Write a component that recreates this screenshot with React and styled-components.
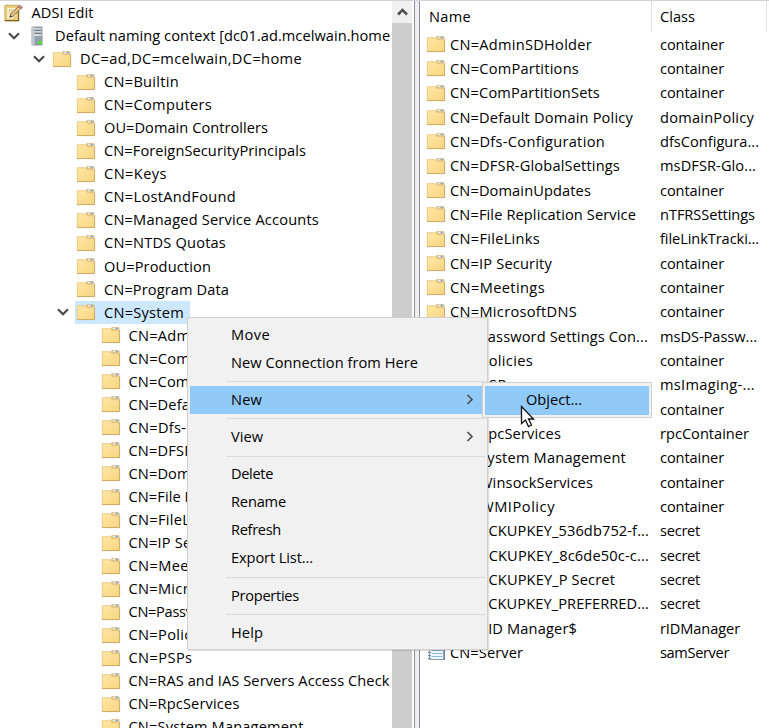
import React, { useLayoutEffect, useRef, useState } from 'react';
import styled, { createGlobalStyle } from 'styled-components';

const GlobalStyle = createGlobalStyle`
  * {
    box-sizing: border-box;
  }
  body {
    margin: 0;
    overflow: hidden;
    background: #fff;
    color: #000;
    font: 14.6px/23px 'Open Sans', 'Noto Sans', sans-serif;
  }
`;
const Window = styled.div`
  display: flex;
  position: relative;
  width: 769px;
  height: 728px;
  overflow: hidden;
  background: #efeff2;
  border-top: 1px solid #d2d2d8;
`;
const TreePane = styled.div`
  display: flex;
  width: 415px;
  border-right: 1px solid #898e99;
  background: #fff;
`;
const Tree = styled.div`
  flex: 1;
  min-width: 0;
  margin-right: 2px;
  overflow: hidden;
`;
const TreeRow = styled.div`
  display: flex;
  align-items: center;
  height: 23.05px;
  padding-left: ${({ $indent }) => $indent}px;
  white-space: nowrap;
`;
const Toggle = styled.div`
  display: flex;
  justify-content: center;
  flex: none;
  width: 24px;
`;
const Item = styled.div`
  display: flex;
  align-items: center;
  gap: 8px;
  height: 23px;
  padding: 0 6px 0 1px;
  background: ${({ $selected }) => ($selected ? '#cce8ff' : 'transparent')};
`;
const IconBox = styled.div`
  display: flex;
  justify-content: center;
  flex: none;
  width: 20px;
`;
const Scrollbar = styled.div`
  width: 20px;
  margin-right: 2px;
  background: #cdcdcd;
`;
const ScrollButton = styled.div`
  display: flex;
  align-items: center;
  justify-content: center;
  height: 22px;
  background: #f0f0f0;
`;
const ListPane = styled.div`
  flex: 1;
  margin-left: 4px;
  border-left: 1px solid #898e99;
  background: #fff;
  overflow: hidden;
`;
const ListHeader = styled.div`
  display: flex;
  height: 31px;
`;
const HeaderCell = styled.div`
  width: ${({ $width }) => $width}px;
  padding: 4px 0 0 ${({ $pad }) => $pad}px;
  border-right: 1px solid #e2e2e2;
`;
const ListRow = styled.div`
  display: flex;
  align-items: center;
  height: 24.34px;
  padding-left: 6px;
  white-space: nowrap;
`;
const NameCell = styled.div`
  display: flex;
  align-items: center;
  gap: 4px;
  width: 234px;
`;
const Label = styled.span`
  white-space: pre;
`;
const Menu = styled.div`
  position: absolute;
  left: 187px;
  top: 316px;
  width: 301px;
  height: 333px;
  padding: 3px 2px;
  background: #f1f1f1;
  border: 1px solid #cfcfcf;
  box-shadow: 1px 1px 1px rgba(0, 0, 0, 0.12);
`;
const MenuItem = styled.div`
  display: flex;
  align-items: center;
  justify-content: space-between;
  height: 28.1px;
  padding: 0 11px 2px 41px;
  background: ${({ $active }) => ($active ? '#91c9f7' : 'transparent')};
`;
const Separator = styled.div`
  height: 1px;
  margin: 4px 0 4.1px 36px;
  background: #dadada;
`;
const SubMenu = styled.div`
  position: absolute;
  left: 482px;
  top: 381px;
  width: 170px;
  height: 36px;
  padding: 2px;
  background: #f1f1f1;
  border: 1px solid #cfcfcf;
`;
const SubMenuItem = styled.div`
  display: flex;
  align-items: center;
  height: 29px;
  padding: 0 0 2px 41px;
  margin-top: 1px;
  background: #91c9f7;
`;
const Pointer = styled.svg`
  position: absolute;
  left: 520px;
  top: 404px;
`;

// stretches or tightens the tracking so the text fills the given width
function Text({ children, width }) {
  const ref = useRef(null);
  const [spacing, setSpacing] = useState(-0.3);
  useLayoutEffect(() => {
    if (!width) return;
    const natural =
      ref.current.getBoundingClientRect().width - spacing * children.length;
    setSpacing((width - natural) / children.length);
    // eslint-disable-next-line react-hooks/exhaustive-deps
  }, [children, width]);
  return (
    <Label ref={ref} style={{ letterSpacing: `${spacing}px` }}>
      {children}
    </Label>
  );
}

const FolderIcon = () => (
  <svg width='20' height='18' viewBox='0 0 20 18'>
    <defs>
      <linearGradient id='folder' x1='0' y1='0' x2='1' y2='1'>
        <stop offset='0' stopColor='#ffe8a6' />
        <stop offset='1' stopColor='#f6d47f' />
      </linearGradient>
    </defs>
    <path d='M10 5V2l1-1h6.5l1 1v4z' fill='#dfc08a' />
    <path d='M12 1.8h5v1.4h-5z' fill='#f4efe2' />
    <path d='M14.6 1.8h2v1.4h-2z' fill='#5aa2d6' />
    <path d='M1 2.4h8.2l2 2H19V17H1z' fill='url(#folder)' />
    <path d='M1.3 17V2.7h7.9l2 2h7.5' fill='none' stroke='#e2c079' strokeWidth='.7' />
    <path d='M1 16.6h17.6V4.5' fill='none' stroke='#c6a464' strokeWidth='.9' />
  </svg>
);
const ServerIcon = () => (
  <svg width='12' height='20' viewBox='0 0 12 20'>
    <path d='M1 1h10v18H1z' fill='#93a1ac' stroke='#7e8a93' strokeWidth='.8' />
    <path d='M1 1h2.5v18H1z' fill='#bcc7ce' />
    <path d='M3 3h7.5M3 6h7.5M3 9h7.5' stroke='#e9eef1' strokeWidth='1.4' />
    <path d='M3.5 4.2H10M3.5 7.2H10' stroke='#5a6770' strokeWidth='.9' />
    <path d='M7 15h3.4v3.2H7z' fill='#4be32c' />
  </svg>
);
const EditIcon = () => (
  <svg width='22' height='20' viewBox='0 0 22 20'>
    <path d='M1 1.5h15v17H1z' fill='#e9cf7c' stroke='#c3a550' />
    <path d='M3.5 4.5H13v8.5l-4 3H3.5z' fill='#f9f1cd' />
    <path d='M1 18.5h15V8' stroke='#7b641f' fill='none' strokeWidth='1.4' />
    <path d='M5 7h5M5 10h3.5' stroke='#c2b173' />
    <path d='M6.5 14.5l1-3.6 8.3-8 2.7 2.3-8.4 8.3z' fill='#ecc07c' stroke='#66543d' strokeWidth='.9' />
    <path d='M15.5 3L17 1.2l3.7 2.4L19 5.5z' fill='#cf8080' stroke='#a56a6a' strokeWidth='.6' />
    <path d='M6.3 14.8l.6-2.2 1.6 1.4z' fill='#222' />
  </svg>
);
const ListIcon = () => (
  <svg width='20' height='18' viewBox='0 0 20 18'>
    <path d='M3.5 1.5H18v15H3.5z' fill='#eef6fb' stroke='#8a9aa8' />
    <path d='M5.5 4.5h11M5.5 7.5h11M5.5 10.5h11M5.5 13.5h11' stroke='#8fb9d6' />
    <path d='M2 3.5h3M2 6.5h3M2 9.5h3M2 12.5h3M2 15.5h3' stroke='#7c8994' />
    <path d='M18.2 1v16' stroke='#5b6c9c' strokeWidth='1.2' />
  </svg>
);
const Chevron = ({ d, width = 12, height = 8, color = '#4a4a4a', weight = 2.2 }) => (
  <svg width={width} height={height} viewBox={`0 0 ${width} ${height}`}>
    <path d={d} fill='none' stroke={color} strokeWidth={weight} />
  </svg>
);

const icons = { folder: FolderIcon, server: ServerIcon, edit: EditIcon, list: ListIcon };
const Icon = ({ name = 'folder' }) => {
  const Drawing = icons[name];
  return (
    <IconBox>
      <Drawing />
    </IconBox>
  );
};

// indent is the left edge of the toggle column, the root has no toggle
const tree = [
  { text: 'ADSI Edit', indent: 2.5, icon: 'edit', root: true, width: 62 },
  { text: 'Default naming context [dc01.ad.mcelwain.home]', indent: 2, icon: 'server', open: true, width: 340 },
  { text: 'DC=ad,DC=mcelwain,DC=home', indent: 27, open: true, width: 222 },
  { text: 'CN=Builtin', indent: 51, width: 75 },
  { text: 'CN=Computers', indent: 51, width: 108 },
  { text: 'OU=Domain Controllers', indent: 51, width: 164 },
  { text: 'CN=ForeignSecurityPrincipals', indent: 51, width: 202 },
  { text: 'CN=Keys', indent: 51, width: 63 },
  { text: 'CN=LostAndFound', indent: 51, width: 132 },
  { text: 'CN=Managed Service Accounts', indent: 51, width: 215 },
  { text: 'CN=NTDS Quotas', indent: 51, width: 122 },
  { text: 'OU=Production', indent: 51, width: 107 },
  { text: 'CN=Program Data', indent: 51, width: 125 },
  { text: 'CN=System', indent: 51, open: true, selected: true, width: 80 },
  { text: 'CN=AdminSDHolder', indent: 75.5, width: 142 },
  { text: 'CN=ComPartitions', indent: 75.5, width: 129 },
  { text: 'CN=ComPartitionSets', indent: 75.5, width: 150 },
  { text: 'CN=Default Domain Policy', indent: 75.5, width: 183 },
  { text: 'CN=Dfs-Configuration', indent: 75.5, width: 155 },
  { text: 'CN=DFSR-GlobalSettings', indent: 75.5, width: 170 },
  { text: 'CN=DomainUpdates', indent: 75.5, width: 141 },
  { text: 'CN=File Replication Service', indent: 75.5, width: 185 },
  { text: 'CN=FileLinks', indent: 75.5, width: 90 },
  { text: 'CN=IP Security', indent: 75.5, width: 102 },
  { text: 'CN=Meetings', indent: 75.5, width: 95 },
  { text: 'CN=MicrosoftDNS', indent: 75.5, width: 127 },
  { text: 'CN=Password Settings Container', indent: 75.5 },
  { text: 'CN=Policies', indent: 75.5, width: 83 },
  { text: 'CN=PSPs', indent: 75.5, width: 64 },
  { text: 'CN=RAS and IAS Servers Access Check', indent: 75.5, width: 261 },
  { text: 'CN=RpcServices', indent: 75.5, width: 111 },
  { text: 'CN=System Management', indent: 75.5, width: 175 },
];

const list = [
  { text: 'CN=AdminSDHolder', width: 142, type: 'container', typeWidth: 64 },
  { text: 'CN=ComPartitions', width: 129, type: 'container', typeWidth: 64 },
  { text: 'CN=ComPartitionSets', width: 150, type: 'container', typeWidth: 64 },
  { text: 'CN=Default Domain Policy', width: 183, type: 'domainPolicy', typeWidth: 94 },
  { text: 'CN=Dfs-Configuration', width: 155, type: 'dfsConfigura...', typeWidth: 99 },
  { text: 'CN=DFSR-GlobalSettings', width: 170, type: 'msDFSR-Glo...', typeWidth: 96 },
  { text: 'CN=DomainUpdates', width: 141, type: 'container', typeWidth: 64 },
  { text: 'CN=File Replication Service', width: 186, type: 'nTFRSSettings', typeWidth: 95 },
  { text: 'CN=FileLinks', width: 90, type: 'fileLinkTracki...', typeWidth: 99 },
  { text: 'CN=IP Security', width: 102, type: 'container', typeWidth: 64 },
  { text: 'CN=Meetings', width: 95, type: 'container', typeWidth: 64 },
  { text: 'CN=MicrosoftDNS', width: 127, type: 'container', typeWidth: 64 },
  { text: 'CN=Password Settings Con...', width: 198, type: 'msDS-Passw...', typeWidth: 97 },
  { text: 'CN=Policies', width: 83, type: 'container', typeWidth: 64 },
  { text: 'CN=PSPs', width: 64, type: 'msImaging-...', typeWidth: 95 },
  { text: 'CN=RAS and IAS Servers...', width: 190, type: 'container', typeWidth: 64 },
  { text: 'CN=RpcServices', width: 111, type: 'rpcContainer', typeWidth: 89 },
  { text: 'CN=System Management', width: 176, type: 'container', typeWidth: 64 },
  { text: 'CN=WinsockServices', width: 143, type: 'container', typeWidth: 64 },
  { text: 'CN=WMIPolicy', width: 105, type: 'container', typeWidth: 64 },
  { text: 'CN=BCKUPKEY_536db752-f...', width: 199, type: 'secret', typeWidth: 40, icon: 'list' },
  { text: 'CN=BCKUPKEY_8c6de50c-c...', width: 199, type: 'secret', typeWidth: 40, icon: 'list' },
  { text: 'CN=BCKUPKEY_P Secret', width: 165, type: 'secret', typeWidth: 40, icon: 'list' },
  { text: 'CN=BCKUPKEY_PREFERRED...', width: 199, type: 'secret', typeWidth: 40, icon: 'list' },
  { text: 'CN=RID Manager$', width: 127, type: 'rIDManager', typeWidth: 80, icon: 'list' },
  { text: 'CN=Server', width: 73, type: 'samServer', typeWidth: 69, icon: 'list' },
];

const menu = [
  { text: 'Move', width: 39 },
  { text: 'New Connection from Here', width: 187 },
  null,
  { text: 'New', width: 31, arrow: true, active: true },
  null,
  { text: 'View', width: 32, arrow: true },
  null,
  { text: 'Delete', width: 42 },
  { text: 'Rename', width: 55 },
  { text: 'Refresh', width: 50 },
  { text: 'Export List...', width: 82 },
  null,
  { text: 'Properties', width: 68 },
  null,
  { text: 'Help', width: 32 },
];

export default function App() {
  return (
    <Window>
      <GlobalStyle />
      <TreePane>
        <Tree>
          {tree.map(row => (
            <TreeRow key={row.text} $indent={row.indent}>
              {!row.root && (
                <Toggle>{row.open && <Chevron d='M1 1.2l5 5 5-5' />}</Toggle>
              )}
              <Item $selected={row.selected}>
                <Icon name={row.icon} />
                <Text width={row.width}>{row.text}</Text>
              </Item>
            </TreeRow>
          ))}
        </Tree>
        <Scrollbar>
          <ScrollButton>
            <Chevron d='M1 6.5l4.5-4.5 4.5 4.5' width={11} color='#505050' weight={2.6} />
          </ScrollButton>
        </Scrollbar>
      </TreePane>
      <ListPane>
        <ListHeader>
          <HeaderCell $width={232} $pad={9}>
            <Text width={42}>Name</Text>
          </HeaderCell>
          <HeaderCell $width={115} $pad={8}>
            <Text width={35}>Class</Text>
          </HeaderCell>
        </ListHeader>
        {list.map(row => (
          <ListRow key={row.text}>
            <NameCell>
              <Icon name={row.icon} />
              <Text width={row.width}>{row.text}</Text>
            </NameCell>
            <Text width={row.typeWidth}>{row.type}</Text>
          </ListRow>
        ))}
      </ListPane>
      <Menu>
        {menu.map((item, i) =>
          item ? (
            <MenuItem key={item.text} $active={item.active}>
              <Text width={item.width}>{item.text}</Text>
              {item.arrow && (
                <Chevron d='M1.5 1l4.5 4.5-4.5 4.5' width={8} height={11} weight={1.6} />
              )}
            </MenuItem>
          ) : (
            <Separator key={i} />
          )
        )}
      </Menu>
      <SubMenu>
        <SubMenuItem>
          <Text width={56}>Object...</Text>
        </SubMenuItem>
      </SubMenu>
      <Pointer width='16' height='24' viewBox='0 0 16 24'>
        <path d='M1.5 1.5v17l4-3.5 3 6.5 3-1.5-3-6h5z' fill='#fff' stroke='#111' strokeWidth='1.3' />
      </Pointer>
    </Window>
  );
}
